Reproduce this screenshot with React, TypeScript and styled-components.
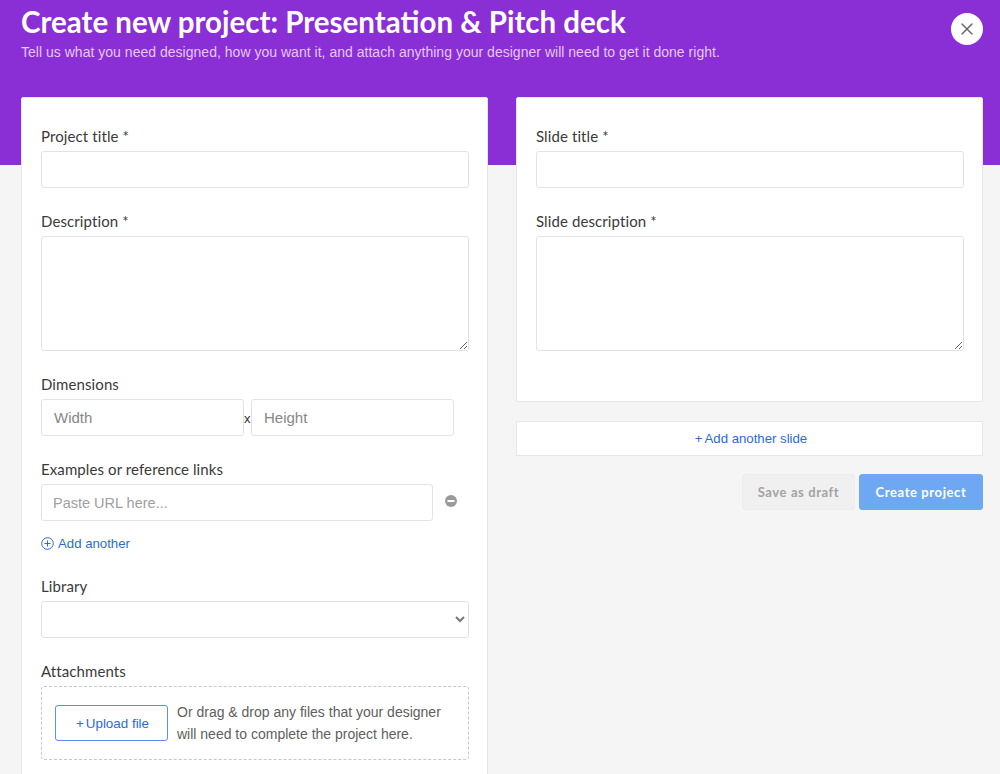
import React from "react";
import styled, { createGlobalStyle } from "styled-components";
import { X } from "lucide-react";

const GlobalStyle = createGlobalStyle`
  * { box-sizing: border-box; }
  html, body { margin: 0; height: 774px; overflow: hidden; background: #f5f5f5; }
  body { font-family: "Liberation Sans", Arial, sans-serif; color: #3c3c3c; }
`;

const heading = `"Lato", "Open Sans", sans-serif`;
const body = `"Liberation Sans", Arial, sans-serif`;

const Header = styled.header`
  height: 165px;
  background: #8a2ed6;
  padding: 0 17px 0 21px;
  display: flex;
  justify-content: space-between;
  align-items: flex-start;
`;

const Title = styled.h1`
  margin: 3px 0 0;
  font: 700 29.5px/38px ${heading};
  color: #fff;
  white-space: nowrap;
`;

const Subtitle = styled.p`
  margin: 1px 0 0;
  font-size: 14px;
  line-height: 20px;
  letter-spacing: 0.02px;
  color: #e4c9f6;
  white-space: nowrap;
`;

const CloseButton = styled.button`
  width: 32px;
  height: 32px;
  margin-top: 13px;
  padding: 0;
  border: 0;
  border-radius: 50%;
  background: #fff;
  color: #666;
  display: flex;
  align-items: center;
  justify-content: center;
`;

const Columns = styled.main`
  margin: -68px 17px 0 21px;
  display: grid;
  grid-template-columns: 467px 467px;
  column-gap: 28px;
  align-items: start;
`;

const Card = styled.section`
  background: #fff;
  border: 1px solid #e6e6e6;
  border-radius: 2px;
  padding: 28px 18px 50px 19px;
`;

const Side = styled.div`
  display: flex;
  flex-direction: column;
`;

const Field = styled.div`
  margin-bottom: 23px;
  &:last-child { margin-bottom: 0; }
`;

const Label = styled.label`
  display: block;
  height: 20px;
  margin-bottom: 5px;
  font: 400 15px/20px ${heading};
  letter-spacing: 0.1px;
  color: #3a3a3a;
`;

const fieldBox = `
  display: block;
  border: 1px solid #e3e3e3;
  border-radius: 3px;
  background: #fff;
  outline: none;
`;

const Input = styled.input<{ $width?: number }>`
  ${fieldBox}
  width: ${(p) => (p.$width ? `${p.$width}px` : "100%")};
  height: 37px;
  padding: 0 12px;
  font: 400 15px ${body};
  &::placeholder { color: #878787; opacity: 1; }
`;

const UrlInput = styled(Input)`
  padding: 0 11px;
  font-size: 14.5px;
  &::placeholder { color: #a0a0a0; }
`;

const TextArea = styled.textarea`
  ${fieldBox}
  width: 100%;
  height: 115px;
  padding: 8px 12px;
  resize: vertical;
`;

const Select = styled.select`
  ${fieldBox}
  width: 100%;
  height: 37px;
  padding: 0 4px;
  color: #777;
`;

const Row = styled.div`
  display: flex;
  align-items: center;
`;

const Times = styled.span`
  width: 7px;
  margin-top: 2px;
  font-size: 13px;
  line-height: 1;
  color: #333;
`;

const MinusIcon = styled.svg`
  margin: -3px 0 0 12px;
`;

const TextLink = styled.a`
  display: flex;
  align-items: center;
  gap: 4px;
  margin-top: 12px;
  height: 20px;
  font-size: 13.2px;
  color: #2a6bdc;
  text-decoration: none;
`;

const DropZone = styled.div`
  height: 74px;
  border: 1px dashed #c8c8c8;
  border-radius: 3px;
  padding: 0 13px;
  display: flex;
  align-items: center;
  gap: 9px;
`;

const Plus = styled.span`
  margin-right: 2px;
`;

const UploadButton = styled.button`
  width: 113px;
  height: 36px;
  padding: 0 0 0 2px;
  border: 1px solid #5a90e6;
  border-radius: 3px;
  background: #fff;
  color: #2a6bdc;
  font: 400 13.4px ${body};
`;

const DropText = styled.p`
  margin: 0;
  font-size: 14px;
  line-height: 22px;
  color: #606060;
  white-space: nowrap;
`;

const AddSlide = styled.button`
  height: 35px;
  margin-top: 19px;
  padding: 0 0 0 3px;
  border: 1px solid #e6e6e6;
  background: #fff;
  color: #2a6bdc;
  font: 400 13.2px ${body};
`;

const Actions = styled.div`
  margin-top: 18px;
  display: flex;
  justify-content: flex-end;
  gap: 4px;
`;

const ActionButton = styled.button<{ $primary?: boolean; $width: number }>`
  width: ${(p) => p.$width}px;
  height: 36px;
  padding: 0;
  border-radius: 3px;
  border: 1px solid ${(p) => (p.$primary ? "#6ea8f3" : "#ebebeb")};
  background: ${(p) => (p.$primary ? "#6ea8f3" : "#f0f0f0")};
  color: ${(p) => (p.$primary ? "#fff" : "#a3a3a3")};
  font: 700 13px ${heading};
  letter-spacing: 0.6px;
`;

export default function App() {
  return (
    <>
      <GlobalStyle />
      <Header>
        <div>
          <Title>Create new project: Presentation &amp; Pitch deck</Title>
          <Subtitle>
            Tell us what you need designed, how you want it, and attach anything your designer will
            need to get it done right.
          </Subtitle>
        </div>
        <CloseButton aria-label="Close">
          <X size={20} strokeWidth={1.7} />
        </CloseButton>
      </Header>
      <Columns>
        <Card>
          <Field>
            <Label>Project title *</Label>
            <Input />
          </Field>
          <Field>
            <Label>Description *</Label>
            <TextArea />
          </Field>
          <Field>
            <Label>Dimensions</Label>
            <Row>
              <Input $width={203} placeholder="Width" />
              <Times>x</Times>
              <Input $width={203} placeholder="Height" />
            </Row>
          </Field>
          <Field>
            <Label>Examples or reference links</Label>
            <Row>
              <UrlInput $width={392} placeholder="Paste URL here..." />
              <MinusIcon width="12" height="12" viewBox="0 0 12 12">
                <circle cx="6" cy="6" r="6" fill="#9a9a9a" />
                <rect x="2.5" y="5" width="7" height="2" fill="#fff" />
              </MinusIcon>
            </Row>
            <TextLink href="#">
              <svg width="13" height="13" viewBox="0 0 13 13" fill="none" stroke="#2a6bdc">
                <circle cx="6.5" cy="6.5" r="5.8" />
                <path d="M6.5 3.5v6M3.5 6.5h6" />
              </svg>
              Add another
            </TextLink>
          </Field>
          <Field>
            <Label>Library</Label>
            <Select />
          </Field>
          <Field>
            <Label>Attachments</Label>
            <DropZone>
              <UploadButton>
                <Plus>+</Plus>Upload file
              </UploadButton>
              <DropText>
                Or drag &amp; drop any files that your designer
                <br />
                will need to complete the project here.
              </DropText>
            </DropZone>
          </Field>
        </Card>
        <Side>
          <Card>
            <Field>
              <Label>Slide title *</Label>
              <Input />
            </Field>
            <Field>
              <Label>Slide description *</Label>
              <TextArea />
            </Field>
          </Card>
          <AddSlide>
            <Plus>+</Plus>Add another slide
          </AddSlide>
          <Actions>
            <ActionButton $width={113}>Save as draft</ActionButton>
            <ActionButton $primary $width={124}>Create project</ActionButton>
          </Actions>
        </Side>
      </Columns>
    </>
  );
}
